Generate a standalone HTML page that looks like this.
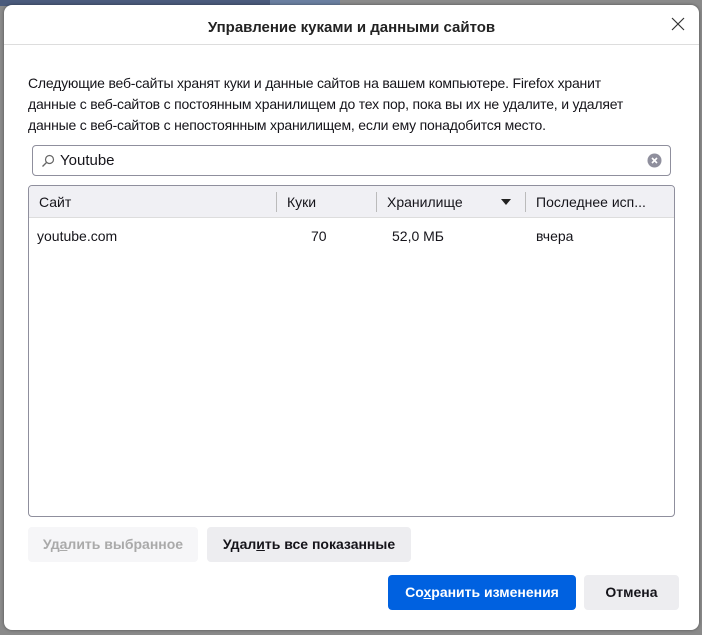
<!DOCTYPE html>
<html><head><meta charset="utf-8"><style>
*{box-sizing:border-box;margin:0;padding:0}
body{width:702px;height:635px;background:#8a8a8a;position:relative;overflow:hidden;font-family:"Liberation Sans","Noto Sans CJK SC",sans-serif;color:#15141a}
.top{position:absolute;left:0;top:0;width:270px;height:6px;background:#4b5b7c}
.top2{position:absolute;left:270px;top:0;width:70px;height:6px;background:#6a7fa0}
.dlg{position:absolute;left:4px;top:5px;width:695px;height:625px;background:#fff;border-radius:8px;box-shadow:0 0 3px rgba(0,0,0,.4)}
.a{position:absolute}
.title{left:0;width:695px;top:14px;text-align:center;font-size:15px;font-weight:bold;color:#222}
.hline{left:0;top:39px;width:695px;height:1px;background:#ddd}
.para{left:24px;top:68px;font-size:14px;line-height:21px;width:680px;color:#15141a;white-space:nowrap;letter-spacing:-0.2px}
.search{left:28px;top:140px;width:639px;height:31px;border:1px solid #8f8f9d;border-radius:4px}
.table{left:24px;top:180px;width:647px;height:332px;border:1px solid #8f8f9d;border-radius:4px;overflow:hidden}
.th{position:absolute;top:0;left:0;width:100%;height:32px;background:#f0f0f4;border-bottom:1px solid #ddd;font-size:14px}
.th span,.row span{position:absolute;top:8px}
.div{position:absolute;top:6px;width:1px;height:20px;background:#bbb}
.row{position:absolute;top:32px;left:0;width:100%;height:36px;font-size:14px}
.btn{position:absolute;height:35px;border-radius:4px;font-size:14px;font-weight:bold;text-align:center;line-height:35px}
</style></head><body>
<div class="top"></div><div class="top2"></div>
<div class="dlg">
<div class="a title">Управление куками и данными сайтов</div>
<svg class="a" style="left:667px;top:12px" width="14" height="14" viewBox="0 0 14 14"><path d="M1 1L13 13M13 1L1 13" stroke="#333" stroke-width="1.2"/></svg>
<div class="a hline"></div>
<div class="a para">Следующие веб-сайты хранят куки и данные сайтов на вашем компьютере. Firefox хранит<br>данные с веб-сайтов с постоянным хранилищем до тех пор, пока вы их не удалите, и удаляет<br>данные с веб-сайтов с непостоянным хранилищем, если ему понадобится место.</div>
<div class="a search">
<svg style="position:absolute;left:8px;top:8px" width="14" height="14" viewBox="0 0 14 14"><circle cx="8.5" cy="5.5" r="4" fill="none" stroke="#666" stroke-width="1.2"/><path d="M5.5 8.5L1.5 12.5" stroke="#666" stroke-width="1.3"/></svg>
<span style="position:absolute;left:27px;top:6px;font-size:15px">Youtube</span>
<svg style="position:absolute;right:8px;top:7px" width="15" height="15" viewBox="0 0 15 15"><circle cx="7.5" cy="7.5" r="7" fill="#8f8f9d"/><path d="M5 5L10 10M10 5L5 10" stroke="#fff" stroke-width="1.6"/></svg>
</div>
<div class="a table">
<div class="th">
<span style="left:10px">Сайт</span>
<div class="div" style="left:247px"></div>
<span style="left:258px">Куки</span>
<div class="div" style="left:347px"></div>
<span style="left:358px">Хранилище</span>
<svg style="position:absolute;left:472px;top:13px" width="10" height="6"><path d="M0 0H10L5 6Z" fill="#222"/></svg>
<div class="div" style="left:496px"></div>
<span style="left:507px">Последнее исп...</span>
</div>
<div class="row">
<span style="left:8px;top:10px">youtube.com</span>
<span style="left:282px;top:10px">70</span>
<span style="left:363px;top:10px">52,0 МБ</span>
<span style="left:507px;top:10px">вчера</span>
</div>
</div>
<div class="btn" style="left:24px;top:522px;width:170px;background:#f6f6f8;color:#aaa">Уд<u>а</u>лить выбранное</div>
<div class="btn" style="left:203px;top:522px;width:204px;background:#ededf0;color:#15141a">Удал<u>и</u>ть все показанные</div>
<div class="btn" style="left:384px;top:570px;width:188px;background:#0061e0;color:#fff">Со<u>х</u>ранить изменения</div>
<div class="btn" style="left:580px;top:570px;width:95px;background:#ededf0;color:#15141a">Отмена</div>
</div>
</body></html>
